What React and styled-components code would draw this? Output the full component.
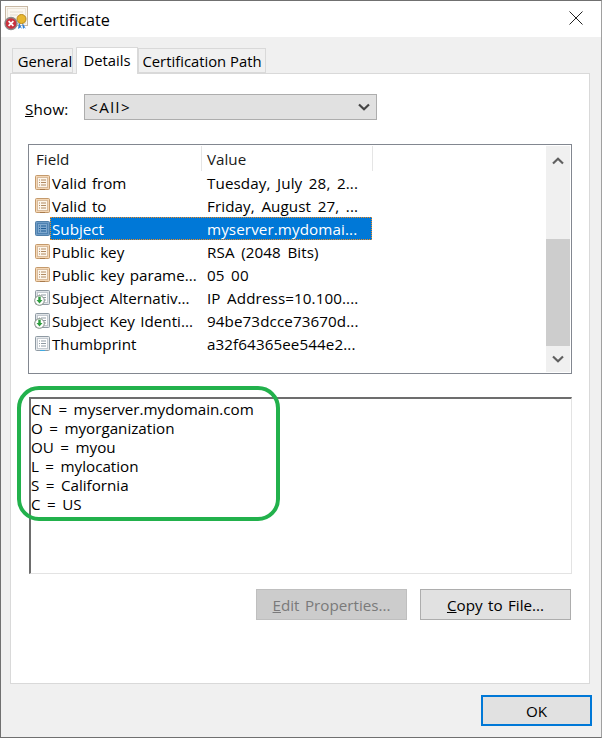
import styled, { createGlobalStyle } from "styled-components";

const GlobalStyle = createGlobalStyle`
  html, body {
    margin: 0;
    padding: 0;
    background: #fff;
  }
  * {
    box-sizing: border-box;
  }
`;

const Window = styled.div`
  position: relative;
  width: 602px;
  height: 738px;
  display: flex;
  flex-direction: column;
  background: #f0f0f0;
  border: 1px solid #707070;
  border-right-color: #a0a0a0;
  font-family: "Open Sans", "Liberation Sans", sans-serif;
  font-size: 15.2px;
  color: #000;
  overflow: hidden;
`;

const TitleBar = styled.div`
  height: 36px;
  background: #fff;
  display: flex;
  align-items: center;
  padding: 0 18px 0 3px;
  flex: none;
`;

const TitleText = styled.div`
  flex: 1;
  font-size: 16.2px;
  margin-top: 1px;
  margin-left: 2px;
`;

const CloseIcon = styled.svg`
  margin-bottom: 2px;
`;

const TabStrip = styled.div`
  height: 36px;
  flex: none;
  display: flex;
  align-items: flex-end;
  padding-left: 11px;
  position: relative;
  z-index: 1;
  font-size: 14.8px;
`;

const Tab = styled.div`
  height: ${(p) => (p.$active ? "27px" : "25px")};
  width: ${(p) => p.$width}px;
  margin-left: ${(p) => p.$gap || 0}px;
  margin-bottom: ${(p) => (p.$active ? "-1px" : "0")};
  background: ${(p) => (p.$active ? "#fff" : "#f0f0f0")};
  border: 1px solid #d9d9d9;
  border-bottom: ${(p) => (p.$active ? "0" : "1px solid #d9d9d9")};
  display: flex;
  align-items: center;
  justify-content: center;
  white-space: nowrap;
  padding-bottom: ${(p) => (p.$active ? "3px" : "0")};
  padding-left: ${(p) => p.$inset || 0}px;
`;

const Panel = styled.div`
  margin: 0 11px 0 9px;
  height: 611px;
  flex: none;
  background: #fff;
  border: 1px solid #d9d9d9;
  padding: 20px 18px 0 17px;
  display: flex;
  flex-direction: column;
`;

const ShowRow = styled.div`
  display: flex;
  align-items: center;
  height: 26px;
`;

const ShowLabel = styled.div`
  width: 59px;
  margin-left: -3px;
  padding-top: 4px;
  letter-spacing: 0.2px;
`;

const Select = styled.div`
  width: 293px;
  height: 26px;
  background: #e1e1e1;
  border: 1px solid #adadad;
  display: flex;
  align-items: center;
  justify-content: space-between;
  padding: 0 6px 0 4px;
  letter-spacing: 1.5px;
`;

const ListBox = styled.div`
  margin-top: 24px;
  height: 230px;
  width: 544px;
  border: 1px solid #828790;
  padding: 1px;
  display: flex;
  flex: none;
`;

const ListBody = styled.div`
  flex: 1;
  min-width: 0;
`;

const ListHeader = styled.div`
  height: 25px;
  display: flex;
`;

const HeaderCell = styled.div`
  width: ${(p) => p.$width}px;
  height: 25px;
  padding-left: ${(p) => p.$pad}px;
  padding-top: 1px;
  display: flex;
  align-items: center;
  color: #1a1a1a;
  border-right: 1px solid #e5e5e5;
  white-space: nowrap;
`;

const Row = styled.div`
  height: 23px;
  display: flex;
  align-items: center;
  padding-left: 5px;
`;

const RowText = styled.div`
  width: 322px;
  height: 23px;
  display: flex;
  align-items: center;
  padding-left: 2px;
  white-space: nowrap;
  word-spacing: 1.5px;
  background: ${(p) => (p.$selected ? "#0078d7" : "transparent")};
  color: ${(p) => (p.$selected ? "#fff" : "#000")};
  outline: ${(p) => (p.$selected ? "1px dotted #f28a1e" : "none")};
  outline-offset: -1px;
`;

const FieldName = styled.div`
  width: 155px;
`;

const FieldValue = styled.span`
  word-spacing: 2.5px;
  letter-spacing: 0.1px;
`;

const ScrollBar = styled.div`
  width: 24px;
  flex: none;
  background: #f0f0f0;
  display: flex;
  flex-direction: column;
`;

const ScrollButton = styled.div`
  height: ${(p) => (p.$up ? "30px" : "26px")};
  flex: none;
  display: flex;
  align-items: center;
  justify-content: center;
`;

const ScrollTrack = styled.div`
  flex: 1;
  padding-top: 63px;
  display: flex;
  flex-direction: column;
`;

const ScrollThumb = styled.div`
  height: 107px;
  background: #cdcdcd;
`;

const DetailBox = styled.div`
  margin-top: 23px;
  margin-left: 1px;
  width: 543px;
  height: 177px;
  background: #fff;
  border-top: 2px solid #6d6d6d;
  border-left: 2px solid #6d6d6d;
  border-right: 1px solid #e3e3e3;
  border-bottom: 1px solid #e3e3e3;
  padding-top: 1px;
  line-height: 19px;
  white-space: nowrap;
  word-spacing: 2.5px;
`;

const ButtonRow = styled.div`
  margin-top: 15px;
  width: 543px;
  display: flex;
  justify-content: flex-end;
  gap: 13px;
  word-spacing: 1.5px;
`;

const Button = styled.div`
  width: ${(p) => p.$width || 151}px;
  height: 31px;
  flex: none;
  display: flex;
  align-items: center;
  justify-content: center;
  white-space: nowrap;
  background: ${(p) => (p.$disabled ? "#cccccc" : "#e1e1e1")};
  color: ${(p) => (p.$disabled ? "#7a7a7a" : "#000")};
  border: ${(p) => (p.$default ? "2px solid #0078d7" : p.$disabled ? "1px solid #bfbfbf" : "1px solid #adadad")};
`;

const Footer = styled.div`
  flex: 1;
  display: flex;
  justify-content: flex-end;
  padding: 11px 9px 0 0;
`;

const Callout = styled.div`
  position: absolute;
  left: 16px;
  top: 385px;
  width: 263px;
  height: 135px;
  border: 4px solid #22b14c;
  border-radius: 22px;
  pointer-events: none;
`;

function CertIcon({ kind }) {
  const colors = {
    field: { edge: "#c49a6c", fill: "#f4d6b4", inner: "#fdf6ec", line: "#b08a62" },
    selected: { edge: "#4f7ea8", fill: "#6f9cc6", inner: "#7fa8ce", line: "#1f5c95" },
    ext: { edge: "#8f9aa3", fill: "#dfe3e7", inner: "#fff", line: "#8f9aa3" },
    thumb: { edge: "#8f9aa3", fill: "#e6e9ec", inner: "#fff", line: "#8f9aa3" },
  }[kind];
  return (
    <svg width="15" height="16" viewBox="0 0 15 16" style={{ flex: "none", overflow: "visible" }}>
      <rect x="0.5" y="0.5" width="14" height="14" rx="1" fill={colors.fill} stroke={colors.edge} />
      <rect x="2.5" y="2.5" width="10" height="10" fill={colors.inner} stroke={colors.line} strokeOpacity="0.45" />
      <path d="M4 5h1M6 5h5M4 7.5h1M6 7.5h5M4 10h1M6 10h5" stroke={colors.line} />
      {kind === "thumb" && <path d="M5 14.5h5" stroke="#3fa9e0" />}
      {kind === "field" && <path d="M5 14.5h5" stroke="#a87a4c" />}
      {kind === "ext" && (
        <>
          <circle cx="4.5" cy="10.5" r="4.8" fill="#fff" stroke="#7d8a80" />
          <path d="M3.3 6.8h2.4v3.2h1.8L4.5 13.6 1.5 10h1.8z" fill="#2f9e3f" />
        </>
      )}
    </svg>
  );
}

function TitleIcon() {
  return (
    <svg width="27" height="26" viewBox="0 0 27 26" style={{ flex: "none", alignSelf: "flex-start", marginTop: 5 }}>
      <rect x="1.5" y="0.5" width="22" height="19" fill="#fbf7f0" stroke="#c8b8a4" />
      <rect x="3.5" y="2.5" width="18" height="15" fill="none" stroke="#ebe3d6" />
      <path d="M6 6h13M6 9h8" stroke="#e3dccf" />
      <path d="M15 16l-1 7 2.5-1.5L18 23zM18 16l1 7 1.5-1.5L22 23z" fill="#2f7fd6" />
      <circle cx="17.5" cy="13" r="4.5" fill="#e8b72f" stroke="#b98a1c" />
      <circle cx="7" cy="17.5" r="6" fill="#c9313d" stroke="#8a8a8a" strokeWidth="1.4" />
      <path d="M4.6 15.1l4.8 4.8M9.4 15.1l-4.8 4.8" stroke="#fff" strokeWidth="1.7" />
    </svg>
  );
}

function Chevron({ up, color = "#606060" }) {
  return (
    <svg width="12" height="8" viewBox="0 0 12 8">
      <path d={up ? "M1 6.5L6 1.8l5 4.7" : "M1 1.5L6 6.2l5-4.7"} fill="none" stroke={color} strokeWidth="2.2" />
    </svg>
  );
}

const rows = [
  { kind: "field", name: "Valid from", value: "Tuesday, July 28, 2..." },
  { kind: "field", name: "Valid to", value: "Friday, August 27, ..." },
  { kind: "selected", name: "Subject", value: "myserver.mydomai..." },
  { kind: "field", name: "Public key", value: "RSA (2048 Bits)" },
  { kind: "field", name: "Public key parame...", value: "05 00" },
  { kind: "ext", name: "Subject Alternativ...", value: "IP Address=10.100...." },
  { kind: "ext", name: "Subject Key Identi...", value: "94be73dcce73670d..." },
  { kind: "thumb", name: "Thumbprint", value: "a32f64365ee544e2..." },
];

const subject = ["CN = myserver.mydomain.com", "O = myorganization", "OU = myou", "L = mylocation", "S = California", "C = US"];

export default function App() {
  return (
    <>
      <GlobalStyle />
      <Window>
        <TitleBar>
          <TitleIcon />
          <TitleText>Certificate</TitleText>
          <CloseIcon width="14" height="14" viewBox="0 0 14 14">
            <path d="M0.5 0.5l13 13M13.5 0.5l-13 13" stroke="#222" strokeWidth="1" />
          </CloseIcon>
        </TitleBar>
        <TabStrip>
          <Tab $width={61} $inset={5}>General</Tab>
          <Tab $width={62} $gap={3} $active>Details</Tab>
          <Tab $width={128}>Certification Path</Tab>
        </TabStrip>
        <Panel>
          <ShowRow>
            <ShowLabel><u>S</u>how:</ShowLabel>
            <Select>
              <span>&lt;All&gt;</span>
              <Chevron color="#444" />
            </Select>
          </ShowRow>
          <ListBox>
            <ListBody>
              <ListHeader>
                <HeaderCell $width={172} $pad={6}>Field</HeaderCell>
                <HeaderCell $width={171} $pad={5}>Value</HeaderCell>
              </ListHeader>
              {rows.map((r) => (
                <Row key={r.name}>
                  <CertIcon kind={r.kind} />
                  <RowText $selected={r.kind === "selected"}>
                    <FieldName>{r.name}</FieldName>
                    <FieldValue>{r.value}</FieldValue>
                  </RowText>
                </Row>
              ))}
            </ListBody>
            <ScrollBar>
              <ScrollButton $up><Chevron up /></ScrollButton>
              <ScrollTrack><ScrollThumb /></ScrollTrack>
              <ScrollButton><Chevron /></ScrollButton>
            </ScrollBar>
          </ListBox>
          <DetailBox>
            {subject.map((line) => (
              <div key={line}>{line}</div>
            ))}
          </DetailBox>
          <ButtonRow>
            <Button $disabled><span><u>E</u>dit Properties...</span></Button>
            <Button><span><u>C</u>opy to File...</span></Button>
          </ButtonRow>
        </Panel>
        <Footer>
          <Button $default $width={111}>OK</Button>
        </Footer>
        <Callout />
      </Window>
    </>
  );
}
